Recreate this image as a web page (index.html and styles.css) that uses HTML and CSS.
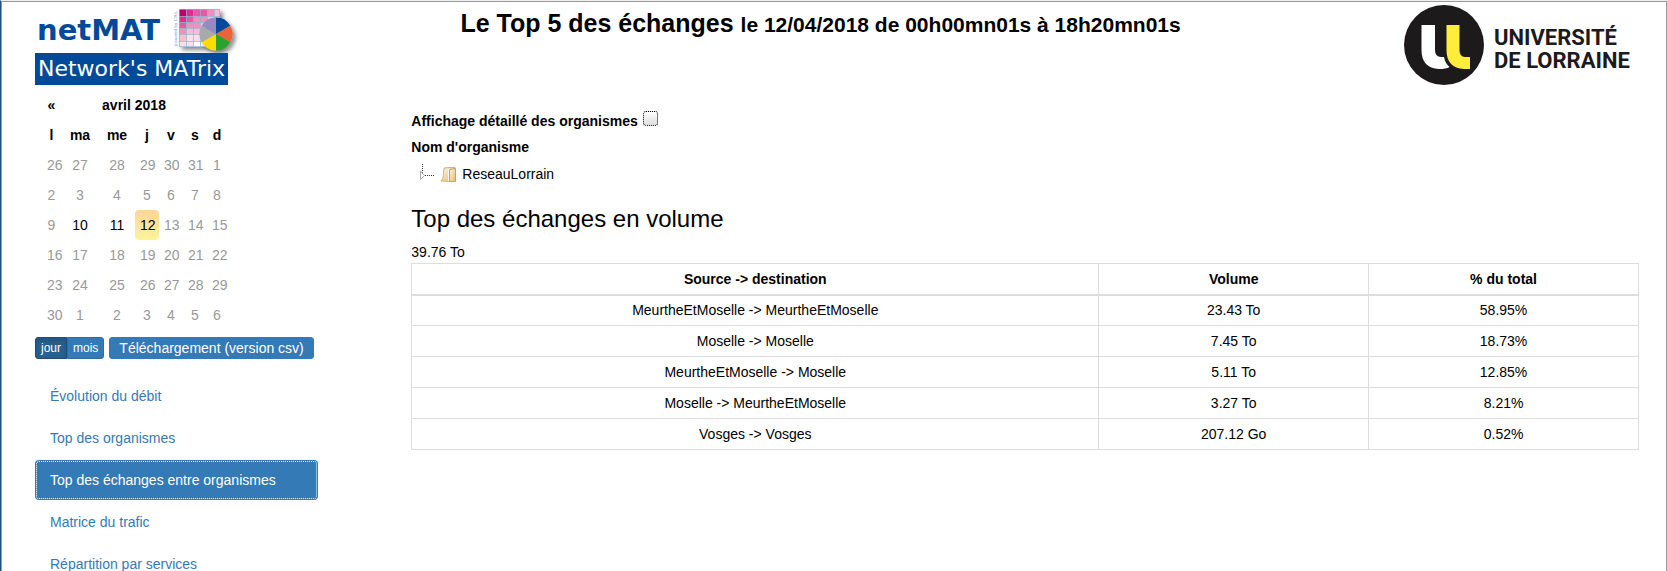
FILE: index.html
```html
<!DOCTYPE html>
<html lang="fr">
<head>
<meta charset="utf-8">
<title>netMAT - Top des échanges</title>
<link rel="stylesheet" href="styles.css">
</head>
<body>
<div class="page">
  <aside class="sidebar">
    <svg class="logo" width="207" height="81" viewBox="0 0 207 81" role="img" aria-label="netMAT Network's MATrix">
      <defs>
        <filter id="shadow" x="-30%" y="-30%" width="170%" height="170%"><feDropShadow dx="3" dy="3" stdDeviation="2" flood-color="#000" flood-opacity=".45"/></filter>
      </defs>
      <text class="logo-name" x="2" y="35">netMAT</text>
      <text class="logo-credit" transform="translate(142 41) rotate(-90)">powered by CIRIL</text>
      <g filter="url(#shadow)">
        <rect x="144" y="4" width="41" height="38" fill="#fff"/>
        <g>
          <path fill="#b9006b" d="M144 4h7v7h-7z"/>
          <path fill="#e02f8e" d="M151 4h7v7h-7zM144 11h7v6h-7z"/>
          <path fill="#e55aa2" d="M158 4h7v7h-7zM151 11h7v6h-7zM165 4h7v7h-7zM144 17h7v6h-7z"/>
          <path fill="#ee91bd" d="M172 4h7v7h-7zM158 11h14v6h-14zM151 17h14v6h-14zM144 23h7v6h-7z"/>
          <path fill="#f5bdd7" d="M179 4h6v7h-6zM172 11h13v6h-13zM165 17h14v6h-14zM151 23h14v6h-14zM144 29h7v7h-7z"/>
          <path fill="#fadfea" d="M179 17h6v6h-6zM165 23h20v6h-20zM151 29h14v7h-14zM144 36h14v6h-14z"/>
        </g>
        <path fill="none" stroke="#8fb2d9" stroke-opacity=".7" d="M144.500 4v38M151.500 4v38M158.500 4v38M165.500 4v38M172.500 4v38M179.500 4v38M184.500 4v38M144 4.500h41M144 11.500h41M144 17.500h41M144 23.500h41M144 29.500h41M144 36.500h41M144 41.500h41"/>
      </g>
      <g filter="url(#shadow)">
        <path fill="#004a99" d="M181 29V12.500A16.500 16.500 0 0 1 195.300 20.750z"/>
        <path fill="#eb6437" d="M181 29L195.300 20.750A16.500 16.500 0 0 1 195.300 37.250z"/>
        <path fill="#2ba32d" d="M181 29L195.300 37.250A16.500 16.500 0 0 1 181 45.500z"/>
        <path fill="#ffdc00" d="M181 29V45.500A16.500 16.500 0 0 1 166.700 37.250z"/>
        <path fill="#a9a9ad" d="M181 29L166.700 37.250A16.500 16.500 0 0 1 166.700 20.750z"/>
        <path fill="#958bc0" d="M181 29L166.700 20.750A16.500 16.500 0 0 1 181 12.500z"/>
      </g>
      <path fill="#004a99" d="M0 48h193v32H0z"/>
      <text class="logo-tagline" x="3" y="71">Network's MATrix</text>
    </svg>

    <table class="calendar">
      <colgroup><col class="col-l"><col class="col-ma"><col class="col-me"><col class="col-j"><col class="col-v"><col class="col-s"><col class="col-d"></colgroup>
      <thead>
        <tr><th><button class="prev" type="button" aria-label="Mois précédent">«</button></th><th colspan="5">avril 2018</th><th></th></tr>
        <tr><th>l</th><th>ma</th><th>me</th><th>j</th><th>v</th><th>s</th><th>d</th></tr>
      </thead>
      <tbody>
        <tr><td>26</td><td>27</td><td>28</td><td>29</td><td>30</td><td>31</td><td>1</td></tr>
        <tr><td>2</td><td>3</td><td>4</td><td>5</td><td>6</td><td>7</td><td>8</td></tr>
        <tr><td>9</td><td class="open">10</td><td class="open">11</td><td class="today">12</td><td>13</td><td>14</td><td>15</td></tr>
        <tr><td>16</td><td>17</td><td>18</td><td>19</td><td>20</td><td>21</td><td>22</td></tr>
        <tr><td>23</td><td>24</td><td>25</td><td>26</td><td>27</td><td>28</td><td>29</td></tr>
        <tr><td>30</td><td>1</td><td>2</td><td>3</td><td>4</td><td>5</td><td>6</td></tr>
      </tbody>
    </table>

    <div class="actions">
      <div class="period">
        <button class="btn btn-small active" type="button">jour</button><button class="btn btn-small" type="button">mois</button>
      </div>
      <button class="btn" type="button">Téléchargement (version csv)</button>
    </div>

    <nav class="menu">
      <a href="#debit">Évolution du débit</a>
      <a href="#organismes">Top des organismes</a>
      <a href="#echanges" class="current">Top des échanges entre organismes</a>
      <a href="#matrice">Matrice du trafic</a>
      <a href="#services">Répartition par services</a>
    </nav>
  </aside>

  <main class="content">
    <header class="header">
      <h1>Le Top 5 des échanges <small>le 12/04/2018 de 00h00mn01s à 18h20mn01s</small></h1>
      <svg class="univ" width="230" height="82" viewBox="0 0 230 82" role="img" aria-label="Université de Lorraine">
        <circle cx="40" cy="40" r="40" fill="#1d1a1c"/>
        <path fill="#fff" d="M17.500 20H31V45Q31 52 37 52H40Q41 58 45.500 62Q42 64 35 64Q17.500 63 17.500 45z"/>
        <path fill="#ffed3b" d="M42.500 20H55.500V45Q55.500 52 61 52H66V64H60Q42.500 63 42.500 45z"/>
        <text class="univ-name" x="90" y="40">UNIVERSITÉ</text>
        <text class="univ-name" x="90" y="63">DE LORRAINE</text>
      </svg>
    </header>

    <div class="option">
      <label for="detail">Affichage détaillé des organismes</label>
      <input id="detail" type="checkbox">
    </div>
    <div class="tree-title">Nom d'organisme</div>
    <div class="tree">
      <svg width="38" height="20" viewBox="0 0 38 20" aria-hidden="true">
        <defs><linearGradient id="folder" x1="0" y1="0" x2="1" y2="1"><stop offset="0" stop-color="#fff8e0"/><stop offset="1" stop-color="#dcbd6c"/></linearGradient></defs>
        <path fill="none" stroke="#333" stroke-dasharray="1 1" d="M2.500 0v9M5 11.500h10"/>
        <path fill="#fff" stroke="#aaa" d="M.5 7v8.500l4-4z"/>
        <path fill="url(#folder)" stroke="#d3b472" d="M24 4l5-.5h6v10l-4 4-10-.500 2-3z"/>
        <path fill="url(#folder)" stroke="#c9a552" d="M29.500 5.500l6-1v13h-6z"/>
        <path stroke="#fffaf0" d="M28.500 5v12"/>
      </svg>
      <span>ReseauLorrain</span>
    </div>

    <h2>Top des échanges en volume</h2>
    <div>39.76 To</div>
    <table class="data">
      <thead><tr><th class="route">Source -&gt; destination</th><th>Volume</th><th>% du total</th></tr></thead>
      <tbody>
        <tr><td>MeurtheEtMoselle -&gt; MeurtheEtMoselle</td><td>23.43 To</td><td>58.95%</td></tr>
        <tr><td>Moselle -&gt; Moselle</td><td>7.45 To</td><td>18.73%</td></tr>
        <tr><td>MeurtheEtMoselle -&gt; Moselle</td><td>5.11 To</td><td>12.85%</td></tr>
        <tr><td>Moselle -&gt; MeurtheEtMoselle</td><td>3.27 To</td><td>8.21%</td></tr>
        <tr><td>Vosges -&gt; Vosges</td><td>207.12 Go</td><td>0.52%</td></tr>
      </tbody>
    </table>
  </main>
</div>
</body>
</html>
```
FILE: styles.css
```css
* { box-sizing: border-box; }

body {
  margin: 0;
  color: #000;
  background: #fff;
  font: 14px/21px "Liberation Sans", Arial, sans-serif;
}

.page {
  display: grid;
  grid-template-columns: minmax(0, 3fr) minmax(0, 13fr);
  column-gap: 93px;
  height: 100vh;
  padding: 4px 28px 0 34px;
  overflow: auto;
  scrollbar-width: none;
  border-top: 1px solid #eee;
  border-left: 1px solid #1f4f7a;
  box-shadow: inset 1px 1px #999, inset -1px 0 #999;
}

.logo, .univ { display: block; }
.logo { overflow: visible; }
.logo-name { fill: #004a99; font: bold 29px "DejaVu Sans", sans-serif; }
.logo-tagline { fill: #fff; font: 22px "DejaVu Sans", sans-serif; }
.logo-credit { fill: #6f9bcd; font: 4px "DejaVu Sans", sans-serif; }

.calendar {
  width: 185px;
  margin: 4px 0 0 7px;
  table-layout: fixed;
  border-collapse: collapse;
  text-align: center;
}
.calendar th, .calendar td { height: 30px; padding: 0 5px; }
.calendar td { color: #999; }
.calendar td.open { color: #000; }
.calendar td.today {
  color: #000;
  background: linear-gradient(#fdd49a, #fdf59a);
  border-radius: 4px;
}
.col-l { width: 19px; }
.col-ma { width: 38px; }
.col-me { width: 36px; }
.col-j, .col-v, .col-s { width: 24px; }
.col-d { width: 20px; }
.prev { padding: 0; border: 0; background: none; color: inherit; font: inherit; }

.actions { display: flex; gap: 5px; margin-top: 7px; }
.period { display: flex; }
.btn {
  height: 22px;
  padding: 0 9px;
  border: 1px solid #337ab7;
  border-radius: 3px;
  background: #337ab7;
  color: #fff;
  font: 14px/20px "Liberation Sans", Arial, sans-serif;
  white-space: nowrap;
}
.btn-small { padding: 0 5px; font-size: 12px; border-color: #2e6da4; border-radius: 0 3px 3px 0; }
.btn-small.active {
  background: #286090;
  border-color: #204d74;
  border-radius: 3px 0 0 3px;
  box-shadow: inset 0 3px 5px rgba(0, 0, 0, .125);
}

.menu { display: flex; flex-direction: column; gap: 2px; margin-top: 17px; }
.menu a {
  padding: 10px 15px 9px;
  border-radius: 4px;
  color: #337ab7;
  text-decoration: none;
  white-space: nowrap;
}
.menu a.current { background: #337ab7; color: #fff; outline: 1px dotted #fff; outline-offset: -2px; }

.header { display: grid; grid-template-columns: 2fr 1fr; }
.header h1 {
  margin: 2px 0 0;
  text-align: center;
  font-size: 25px;
  line-height: 32px;
}
.header small { font-size: 21px; }
.univ { justify-self: end; margin-right: 5px; }
.univ-name { fill: #1d1a1c; font: bold 22px Roboto, sans-serif; }

.option { display: flex; gap: 5px; margin-top: 24px; font-weight: bold; }
.option input {
  appearance: none;
  width: 15px;
  height: 15px;
  margin: 0;
  border: 1px dotted #000;
  border-radius: 3px;
  background: linear-gradient(#fff, #ddd);
}
.tree-title { margin-top: 5px; font-weight: bold; }
.tree { display: flex; gap: 4px; margin: 6px 0 0 9px; }

h2 { margin: 21px 0 10px; font-size: 24px; font-weight: normal; line-height: 26px; }

.data { width: 100%; table-layout: fixed; border-collapse: collapse; text-align: center; }
.data th, .data td { height: 31px; padding: 1px 5px 0; border: 1px solid #ddd; }
.data thead th { border-bottom-width: 2px; }
.data .route { width: 56%; }
```
